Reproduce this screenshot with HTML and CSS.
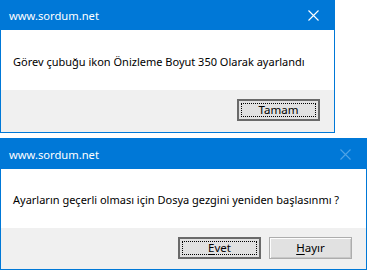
FILE: index.html
```html
<!DOCTYPE html>
<html>
<head>
<meta charset="utf-8">
<link rel="stylesheet" href="styles.css">
</head>
<body>
<div class="dialog dialog-one">
  <div class="titlebar">
    <span class="title">www.sordum.net</span>
    <span class="close">
      <svg width="11" height="11" viewBox="0 0 11 11"><path d="M0.5 0.5 L10.5 10.5 M10.5 0.5 L0.5 10.5" stroke="#fff" stroke-width="1.1" fill="none"/></svg>
    </span>
  </div>
  <div class="content content-one"><p class="msg">Görev çubuğu ikon Önizleme Boyut 350 Olarak ayarlandı</p></div>
  <div class="footer footer-one">
    <button class="btn btn-default"><span class="focus">Tamam</span></button>
  </div>
</div>
<div class="dialog dialog-two">
  <div class="titlebar">
    <span class="title">www.sordum.net</span>
    <span class="close close-disabled">
      <svg width="11" height="11" viewBox="0 0 11 11"><path d="M0.5 0.5 L10.5 10.5 M10.5 0.5 L0.5 10.5" stroke="#4ea3e6" stroke-width="1.1" fill="none"/></svg>
    </span>
  </div>
  <div class="content content-two"><p class="msg">Ayarların geçerli olması için Dosya gezgini yeniden başlasınmı ?</p></div>
  <div class="footer footer-two">
    <button class="btn btn-default"><span class="focus"><u>E</u>vet</span></button>
    <button class="btn"><span class="nofocus"><u>H</u>ayır</span></button>
  </div>
</div>
</body>
</html>
```
FILE: styles.css
```css
html, body {
  margin: 0;
  padding: 0;
  background: #ffffff;
}
body {
  width: 367px;
  height: 271px;
  overflow: hidden;
  font-family: "Noto Sans", "DejaVu Sans", sans-serif;
  font-size: 11px;
  color: #000;
}
.dialog {
  box-sizing: border-box;
  border: 1px solid #0078d7;
  background: #fff;
  display: flex;
  flex-direction: column;
}
.dialog-one {
  width: 335px;
  border-top: none;
}
.dialog-two {
  width: 367px;
  margin-top: 5px;
}
.titlebar {
  height: 30px;
  background: #0078d7;
  color: #fff;
  display: flex;
  align-items: center;
  justify-content: space-between;
  margin: 0 -1px;
  padding-left: 9px;
  box-sizing: border-box;
}
.dialog-two .titlebar {
  margin-top: -1px;
  height: 31px;
  padding-top: 1px;
}
.title {
  font-size: 11.2px;
}
.close {
  width: 46px;
  height: 30px;
  display: flex;
  align-items: center;
  justify-content: center;
  margin-right: -1px;
}
.dialog-two .close {
  margin-right: 8px;
  width: 28px;
}
.content {
  display: flex;
  align-items: center;
  padding-left: 12px;
  padding-top: 2px;
  box-sizing: border-box;
}
.content-one { height: 60px; }
.content-two { height: 59px; }
.msg {
  margin: 0;
  font-size: 11px;
  white-space: nowrap;
}
.footer {
  background: #f0f0f0;
  display: flex;
  justify-content: flex-end;
  align-items: flex-start;
  gap: 8px;
  padding-top: 9px;
  box-sizing: border-box;
}
.footer-one { height: 42px; padding-right: 14px; }
.footer-two { height: 41px; padding-right: 14px; }
.btn {
  box-sizing: border-box;
  width: 83px;
  height: 22px;
  margin: 0;
  padding: 0;
  font-family: inherit;
  font-size: 11.5px;
  line-height: 14px;
  color: #000;
  background: #e1e1e1;
  border: 1px solid #adadad;
  display: flex;
  align-items: center;
  justify-content: center;
  box-shadow: inset 1px 1px 0 #fdfdfd, inset -1px -1px 0 #c8c8c8;
}
.btn-default {
  border: 2px solid #6a6a6a;
  box-shadow: none;
  padding: 1px;
}
.focus {
  box-sizing: border-box;
  flex: 1;
  align-self: stretch;
  display: flex;
  align-items: center;
  justify-content: center;
  border: 1px dotted #000;
  margin: 1px;
  padding-bottom: 1px;
  line-height: 12px;
}
.nofocus {
  display: flex;
  align-items: center;
  justify-content: center;
  padding-bottom: 1px;
}
u {
  text-decoration: underline;
  text-underline-offset: 2px;
}
```
